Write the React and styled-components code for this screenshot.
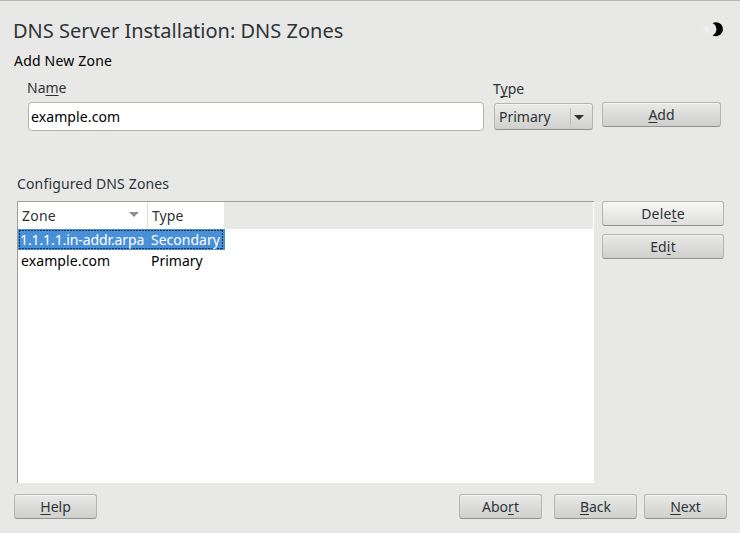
import React from "react";
import styled, { createGlobalStyle, css } from "styled-components";

const GlobalStyle = createGlobalStyle`
  * { box-sizing: border-box; }
  body {
    margin: 0;
    background: #e8e8e6;
    color: #2e3436;
    font-family: "Noto Sans", "Open Sans", sans-serif;
    font-size: 14px;
    line-height: 20px;
  }
`;

const Window = styled.main`
  display: flex;
  flex-direction: column;
  width: 740px;
  height: 533px;
  overflow: hidden;
  border-top: 1px solid #bdb2aa;
  background: #e8e8e6;
  white-space: nowrap;
`;

const TitleBar = styled.header`
  display: flex;
  justify-content: space-between;
  height: 50px;
  padding: 15px 16px 0 13px;
`;

const Title = styled.h1`
  margin: 0;
  font-size: 20px;
  font-weight: 400;
  line-height: 30px;
  letter-spacing: ${(p) => p.$spacing}px;
`;

const ThemeIcon = styled.svg`
  width: 24px;
  height: 18px;
  margin-top: 4px;
`;

const SectionTitle = styled.h2`
  margin: 0;
  height: 20px;
  padding-left: 14px;
  font-size: 14px;
  font-weight: 400;
  color: #000;
  letter-spacing: ${(p) => p.$spacing}px;
`;

const Text = styled.span`
  letter-spacing: ${(p) => p.$spacing || 0}px;
`;

const Mnemonic = styled.span`
  text-decoration: underline 1px;
  text-underline-offset: 2px;
  text-decoration-skip-ink: none;
`;

const ZoneForm = styled.section`
  display: grid;
  grid-template-columns: 456px 99px 119px;
  column-gap: 10px;
  height: 102px;
  padding: 7px 0 0 28px;
`;

const Field = styled.label`
  display: flex;
  flex-direction: column;
  gap: 4px;
  padding-top: ${(p) => p.$top || 0}px;
`;

const FieldLabel = styled.span`
  margin-left: -1px;
`;

const Input = styled.input`
  width: 456px;
  height: 29px;
  padding: 0 2px;
  border: 1px solid #b4b4af;
  border-radius: 4px;
  outline: 0;
  background: #fff;
  color: #000;
  font: inherit;
  letter-spacing: 0.1px;
`;

const Select = styled.div`
  display: flex;
  align-items: center;
  justify-content: space-between;
  height: 27px;
  padding: 0 8px 0 4px;
  border: 1px solid #b4b4b0;
  border-bottom-color: #92928e;
  border-radius: 3px;
  background: linear-gradient(#ebebea, #d0d0ce);
  box-shadow: inset 0 1px #f3f3f2;
`;

const Arrow = styled.span`
  display: flex;
  align-items: center;
  height: 17px;
  padding: 1px 0 0 3px;
  border-left: 1px solid #bdbdba;
`;

const Button = styled.button`
  width: ${(p) => p.$width}px;
  height: 25px;
  margin: ${(p) => p.$margin || "0"};
  padding: 0;
  border: 1px solid #b4b4b0;
  border-bottom-color: #92928e;
  border-radius: 3px;
  background: ${(p) =>
    p.$hover ? "linear-gradient(#f7f7f7, #dededc)" : "linear-gradient(#e9e9e8, #cfcfcd)"};
  box-shadow: inset 0 1px ${(p) => (p.$hover ? "#fafafa" : "#f3f3f2")};
  color: inherit;
  font: inherit;
  line-height: 23px;
  letter-spacing: ${(p) => p.$spacing || 0}px;
`;

const ListLabel = styled.div`
  height: 28px;
  padding: 1px 0 0 17px;
`;

const Zones = styled.section`
  display: flex;
  gap: 8px;
  height: 282px;
  padding-left: 17px;
`;

const Table = styled.div`
  width: 577px;
  background: #fff;
  border-top: 1px solid #9d9d99;
  border-left: 1px solid #9d9d99;
`;

const TableHead = styled.div`
  display: grid;
  grid-template-columns: 130px 76px 1fr;
  height: 27px;
  margin-right: 1px;
  line-height: 27px;
`;

const HeadCell = styled.div`
  display: flex;
  align-items: center;
  justify-content: space-between;
  padding: 0 8px 0 4px;
  border-right: ${(p) => (p.$divided ? "1px solid #dededc" : "0")};
`;

const SortMark = styled.span`
  display: flex;
  padding-bottom: 2px;
`;

const HeadFill = styled.div`
  background: #e8e8e6;
`;

const dashX = "repeating-linear-gradient(90deg, #17324d 0 2px, transparent 2px 3px)";
const dashY = "repeating-linear-gradient(#17324d 0 2px, transparent 2px 3px)";

const selectedRow = css`
  color: #fff;
  background:
    ${dashX} 1px 1px / 204px 1px no-repeat,
    ${dashX} 1px 19px / 204px 1px no-repeat,
    ${dashY} 1px 1px / 1px 19px no-repeat,
    ${dashY} 204px 1px / 1px 19px no-repeat,
    #4a90d9;
`;

const Row = styled.div`
  display: grid;
  grid-template-columns: 130px 77px;
  width: 207px;
  height: 21px;
  line-height: 21px;
  color: #000;
  ${(p) => p.$selected && selectedRow}
`;

const Cell = styled.span`
  padding-left: ${(p) => p.$indent || 3}px;
  letter-spacing: ${(p) => p.$spacing || 0}px;
`;

const SideButtons = styled.div`
  display: flex;
  flex-direction: column;
  gap: 8px;
`;

const Footer = styled.footer`
  display: flex;
  padding: 11px 13px 0 14px;
`;

const Triangle = ({ color }) => (
  <svg width="10" height="5" viewBox="0 0 10 5">
    <polygon points="0,0 10,0 5,5" fill={color} />
  </svg>
);

export default function App() {
  return (
    <>
      <GlobalStyle />
      <Window>
        <TitleBar>
          <Title $spacing={0}>DNS Server Installation: DNS Zones</Title>
          <ThemeIcon viewBox="0 0 24 18">
            <g stroke="#efefee" strokeWidth="1">
              <circle cx="6.700" cy="9" r="2.600" fill="#efefee" />
              <path d="M6.700 2.500v2M6.700 13.500v2M0 9h2M2 4.500l1.500 1.500M2 13.500l1.500-1.500M11.500 4.500L10 6M11.500 13.500L10 12" />
            </g>
            <path d="M12.500 3C18.500 .8 22.900 4.500 22.900 9.300S18.500 17.500 12.500 15.600C17.800 12.800 17.800 5.800 12.500 3z" fill="#000" />
          </ThemeIcon>
        </TitleBar>
        <SectionTitle $spacing={0.2}>Add New Zone</SectionTitle>
        <ZoneForm>
          <Field>
            <FieldLabel>Na<Mnemonic>m</Mnemonic>e</FieldLabel>
            <Input defaultValue="example.com" />
          </Field>
          <Field $top={1}>
            <FieldLabel>T<Mnemonic>y</Mnemonic>pe</FieldLabel>
            <Select>
              <Text>Primary</Text>
              <Arrow><Triangle color="#2e3436" /></Arrow>
            </Select>
          </Field>
          <Button $width={119} $margin="24px 0 0 -1px"><Mnemonic>A</Mnemonic>dd</Button>
        </ZoneForm>
        <ListLabel><Text $spacing={0.15}>Configured DNS Zones</Text></ListLabel>
        <Zones>
          <Table>
            <TableHead>
              <HeadCell $divided>
                <Text $spacing={0.2}>Zone</Text>
                <SortMark><Triangle color="#8c9190" /></SortMark>
              </HeadCell>
              <HeadCell><Text $spacing={0.1}>Type</Text></HeadCell>
              <HeadFill />
            </TableHead>
            <Row $selected>
              <Cell $indent={2} $spacing={-0.1}>1.1.1.1.in-addr.arpa</Cell>
              <Cell>Secondary</Cell>
            </Row>
            <Row>
              <Cell $spacing={0.1}>example.com</Cell>
              <Cell>Primary</Cell>
            </Row>
          </Table>
          <SideButtons>
            <Button $width={122} $spacing={0.15} $hover>Dele<Mnemonic>t</Mnemonic>e</Button>
            <Button $width={122} $spacing={0.15}>Ed<Mnemonic>i</Mnemonic>t</Button>
          </SideButtons>
        </Zones>
        <Footer>
          <Button $width={83}><Mnemonic>H</Mnemonic>elp</Button>
          <Button $width={83} $margin="0 0 0 auto">Abo<Mnemonic>r</Mnemonic>t</Button>
          <Button $width={83} $margin="0 7px 0 12px"><Mnemonic>B</Mnemonic>ack</Button>
          <Button $width={83}><Mnemonic>N</Mnemonic>ext</Button>
        </Footer>
      </Window>
    </>
  );
}
